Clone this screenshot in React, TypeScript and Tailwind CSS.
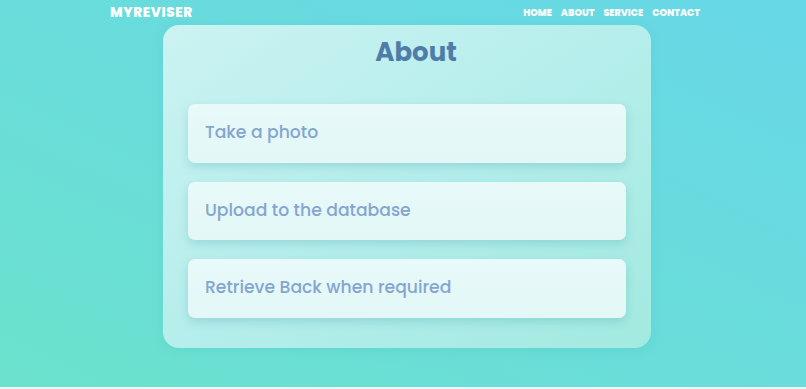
import React from 'react'

const steps = ['Take a photo', 'Upload to the database', 'Retrieve Back when required']

export default function App() {
    return (
        <div
            className="relative h-[389px] w-full overflow-hidden bg-gradient-to-tr from-[#6be2cd] via-[#69dcdb] to-[#67d8e7]"
            style={{ fontFamily: 'Poppins, Inter, "Noto Sans", sans-serif' }}
        >
            {/* Nav */}
            <header className="flex h-[26px] items-center justify-between pl-[110px] pr-[106px] text-white">
                <span className="text-[13.5px] font-extrabold tracking-[0.6px]">MYREVISER</span>
                <nav className="flex gap-[9px] text-[9.5px] font-extrabold">
                    <a>HOME</a>
                    <a>ABOUT</a>
                    <a>SERVICE</a>
                    <a>CONTACT</a>
                </nav>
            </header>

            {/* About card */}
            <section className="ml-[163px] mt-[-1px] flex w-[488px] flex-col rounded-[16px] bg-gradient-to-br from-[#cbf3f2] via-[#b5eeec] to-[#a2eae0] px-[25px] pb-[30px] pt-[8px] shadow-[0_2px_12px_rgba(60,160,170,0.15)]">
                <h1 className="pl-[18px] text-center text-[26px] font-bold leading-[38px] text-[#4f7ca9]">About</h1>
                <div className="mt-[33px] flex w-full flex-col gap-[19px]">
                    {steps.map((s) => (
                        <div
                            key={s}
                            className="flex h-[58.5px] items-center rounded-[7px] bg-gradient-to-b from-[#e8fafa] to-[#e2f7f6] px-[17px] text-[17.2px] font-medium text-[#85a5d1] shadow-[0_4px_10px_rgba(60,150,160,0.25)]"
                        >
                            {s}
                        </div>
                    ))}
                </div>
            </section>

            <div className="absolute bottom-0 left-0 h-[2px] w-full bg-[#e9fbf8]" />
        </div>
    )
}
